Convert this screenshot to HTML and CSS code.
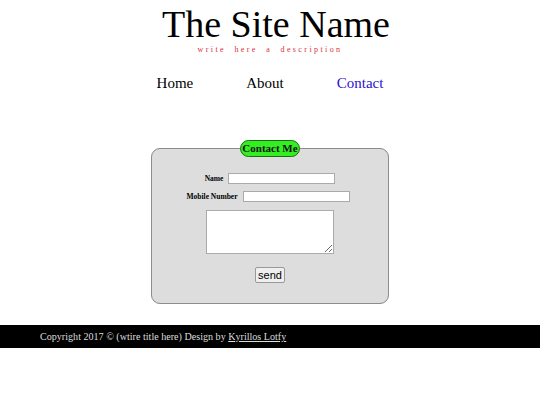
FILE: index.html
```html
<!DOCTYPE html>
<html>
<head>
<meta charset="utf-8">
<link rel="stylesheet" href="styles.css">
</head>
<body>
<header class="header">
  <h1 class="site-name">The Site Name</h1>
  <p class="desc">write here a description</p>
</header>
<nav class="nav">
  <a class="nav-link" href="#">Home</a>
  <a class="nav-link" href="#">About</a>
  <a class="nav-link active" href="#">Contact</a>
</nav>
<main class="main">
  <fieldset class="contact">
    <legend class="legend">Contact Me</legend>
    <div class="row"><label class="lbl">Name</label><input class="field" type="text"></div>
    <div class="row row-mobile"><label class="lbl">Mobile Number</label><input class="field" type="text"></div>
    <div class="row"><textarea class="msg"></textarea></div>
    <div class="row"><button class="send">send</button></div>
  </fieldset>
</main>
<footer class="footer">
  <p class="copy">Copyright 2017 © (wtire title here) Design by <a class="author" href="#">Kyrillos Lotfy</a></p>
</footer>
</body>
</html>
```
FILE: styles.css
```css
html, body {
  margin: 0;
  padding: 0;
  background: #fff;
  font-family: "Liberation Serif", "Times New Roman", serif;
}
.header {
  text-align: center;
  padding-top: 3px;
}
.site-name {
  margin: 0;
  padding-left: 12px;
  font-weight: normal;
  font-size: 38px;
  line-height: 42px;
  color: #000;
}
.desc {
  margin: 0;
  font-size: 8px;
  line-height: 10px;
  color: #d8303a;
  letter-spacing: 2.4px;
  word-spacing: 4px;
}
.nav {
  display: flex;
  justify-content: center;
  gap: 53px;
  margin-top: 18px;
}
.nav-link {
  font-size: 15px;
  line-height: 20px;
  color: #000;
  text-decoration: none;
}
.nav-link.active {
  color: #2b12d0;
}
.main {
  display: flex;
  justify-content: center;
  padding-top: 47px;
}
.contact {
  box-sizing: border-box;
  width: 238px;
  height: 164px;
  margin: 0;
  padding: 16px 0 0;
  background: #dddddd;
  border: 1px solid #8c8c8c;
  border-radius: 9px;
  display: flex;
  flex-direction: column;
  align-items: center;
}
.legend {
  margin: 0 auto;
  background: #33ee22;
  border: 1px solid #1a6e10;
  border-radius: 9px;
  padding: 0 1px;
  font-weight: bold;
  font-size: 11px;
  line-height: 15px;
  color: #111;
}
.row {
  display: flex;
  align-items: center;
  justify-content: center;
  margin-bottom: 7px;
}
.lbl {
  font-weight: bold;
  font-size: 7.5px;
  margin-right: 5px;
}
.row-mobile {
  margin-left: -4px;
}
.field {
  box-sizing: border-box;
  width: 107px;
  height: 11px;
  padding: 0;
  border: 1px solid #aaa;
  background: #fff;
}
.msg {
  box-sizing: border-box;
  width: 128px;
  height: 44px;
  margin: 1px 0 0;
  border: 1px solid #aaa;
  resize: both;
}
.send {
  font-family: "Liberation Sans", Arial, sans-serif;
  font-size: 11px;
  padding: 1px 2px;
  margin-top: 6px;
  background: #efefef;
  border: 1px solid #999;
  border-radius: 2px;
}
.footer {
  margin-top: 21px;
  background: #000;
  height: 23px;
  display: flex;
  align-items: center;
}
.copy {
  margin: 0 0 0 40px;
  font-size: 10.1px;
  color: #ddd;
}
.author {
  color: #ddd;
}
```
